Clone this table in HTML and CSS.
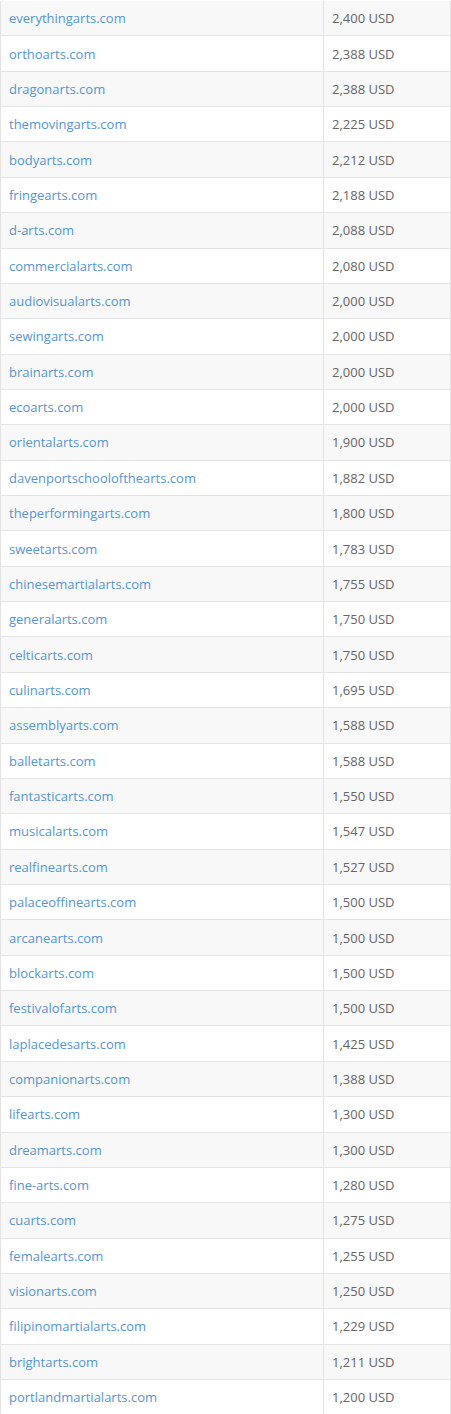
FILE: index.html
```html
<!DOCTYPE html>
<html lang="en">
<head>
<meta charset="utf-8">
<title>Arts domains</title>
<link rel="stylesheet" href="styles.css">
</head>
<body>
<table class="domains">
<tbody>
<tr><td class="name"><a href="#">everythingarts.com</a></td><td class="price">2,400 USD</td></tr>
<tr><td class="name"><a href="#">orthoarts.com</a></td><td class="price">2,388 USD</td></tr>
<tr><td class="name"><a href="#">dragonarts.com</a></td><td class="price">2,388 USD</td></tr>
<tr><td class="name"><a href="#">themovingarts.com</a></td><td class="price">2,225 USD</td></tr>
<tr><td class="name"><a href="#">bodyarts.com</a></td><td class="price">2,212 USD</td></tr>
<tr><td class="name"><a href="#">fringearts.com</a></td><td class="price">2,188 USD</td></tr>
<tr><td class="name"><a href="#">d-arts.com</a></td><td class="price">2,088 USD</td></tr>
<tr><td class="name"><a href="#">commercialarts.com</a></td><td class="price">2,080 USD</td></tr>
<tr><td class="name"><a href="#">audiovisualarts.com</a></td><td class="price">2,000 USD</td></tr>
<tr><td class="name"><a href="#">sewingarts.com</a></td><td class="price">2,000 USD</td></tr>
<tr><td class="name"><a href="#">brainarts.com</a></td><td class="price">2,000 USD</td></tr>
<tr><td class="name"><a href="#">ecoarts.com</a></td><td class="price">2,000 USD</td></tr>
<tr><td class="name"><a href="#">orientalarts.com</a></td><td class="price">1,900 USD</td></tr>
<tr><td class="name"><a href="#">davenportschoolofthearts.com</a></td><td class="price">1,882 USD</td></tr>
<tr><td class="name"><a href="#">theperformingarts.com</a></td><td class="price">1,800 USD</td></tr>
<tr><td class="name"><a href="#">sweetarts.com</a></td><td class="price">1,783 USD</td></tr>
<tr><td class="name"><a href="#">chinesemartialarts.com</a></td><td class="price">1,755 USD</td></tr>
<tr><td class="name"><a href="#">generalarts.com</a></td><td class="price">1,750 USD</td></tr>
<tr><td class="name"><a href="#">celticarts.com</a></td><td class="price">1,750 USD</td></tr>
<tr><td class="name"><a href="#">culinarts.com</a></td><td class="price">1,695 USD</td></tr>
<tr><td class="name"><a href="#">assemblyarts.com</a></td><td class="price">1,588 USD</td></tr>
<tr><td class="name"><a href="#">balletarts.com</a></td><td class="price">1,588 USD</td></tr>
<tr><td class="name"><a href="#">fantasticarts.com</a></td><td class="price">1,550 USD</td></tr>
<tr><td class="name"><a href="#">musicalarts.com</a></td><td class="price">1,547 USD</td></tr>
<tr><td class="name"><a href="#">realfinearts.com</a></td><td class="price">1,527 USD</td></tr>
<tr><td class="name"><a href="#">palaceoffinearts.com</a></td><td class="price">1,500 USD</td></tr>
<tr><td class="name"><a href="#">arcanearts.com</a></td><td class="price">1,500 USD</td></tr>
<tr><td class="name"><a href="#">blockarts.com</a></td><td class="price">1,500 USD</td></tr>
<tr><td class="name"><a href="#">festivalofarts.com</a></td><td class="price">1,500 USD</td></tr>
<tr><td class="name"><a href="#">laplacedesarts.com</a></td><td class="price">1,425 USD</td></tr>
<tr><td class="name"><a href="#">companionarts.com</a></td><td class="price">1,388 USD</td></tr>
<tr><td class="name"><a href="#">lifearts.com</a></td><td class="price">1,300 USD</td></tr>
<tr><td class="name"><a href="#">dreamarts.com</a></td><td class="price">1,300 USD</td></tr>
<tr><td class="name"><a href="#">fine-arts.com</a></td><td class="price">1,280 USD</td></tr>
<tr><td class="name"><a href="#">cuarts.com</a></td><td class="price">1,275 USD</td></tr>
<tr><td class="name"><a href="#">femalearts.com</a></td><td class="price">1,255 USD</td></tr>
<tr><td class="name"><a href="#">visionarts.com</a></td><td class="price">1,250 USD</td></tr>
<tr><td class="name"><a href="#">filipinomartialarts.com</a></td><td class="price">1,229 USD</td></tr>
<tr><td class="name"><a href="#">brightarts.com</a></td><td class="price">1,211 USD</td></tr>
<tr><td class="name"><a href="#">portlandmartialarts.com</a></td><td class="price">1,200 USD</td></tr>
</tbody>
</table>
</body>
</html>
```
FILE: styles.css
```css
html, body {
  margin: 0;
  padding: 0;
  background: #fff;
}

.domains {
  width: 451px;
  margin-top: 1px;
  border-collapse: separate;
  border-spacing: 0;
  font-family: "Open Sans", "Liberation Sans", sans-serif;
  font-size: 13px;
  color: #666;
  border-left: 1px solid #e4e4e4;
  border-right: 1px solid #e4e4e4;
}

.domains td {
  height: 35.36px;
  box-sizing: border-box;
  padding: 0 8px;
  line-height: 18px;
  border-bottom: 1px solid #e4e4e4;
  vertical-align: middle;
}

.domains tr:nth-child(odd) td {
  background: #f8f8f8;
}

.domains .name {
  width: 323px;
  box-sizing: border-box;
  border-right: 1px solid #e4e4e4;
}

.domains .name a {
  color: #5596d2;
  text-decoration: none;
}
```
